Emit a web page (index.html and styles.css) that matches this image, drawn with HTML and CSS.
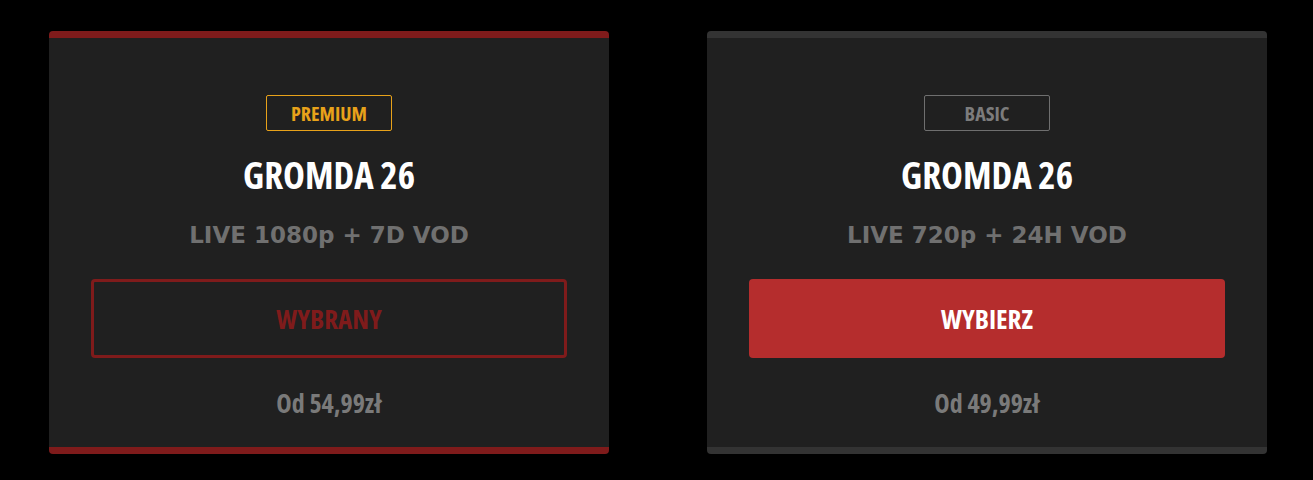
FILE: index.html
```html
<!DOCTYPE html>
<html lang="pl">
<head>
<meta charset="utf-8">
<title>Pakiety</title>
<link rel="stylesheet" href="styles.css">
</head>
<body>
<div class="plans">
  <div class="card card--premium">
    <div class="card__body">
      <span class="badge badge--premium">PREMIUM</span>
      <h2 class="card__title">GROMDA 26</h2>
      <p class="card__sub">LIVE 1080p + 7D VOD</p>
      <button class="btn btn--selected">WYBRANY</button>
      <p class="card__price">Od 54,99zł</p>
    </div>
  </div>
  <div class="card card--basic">
    <div class="card__body">
      <span class="badge badge--basic">BASIC</span>
      <h2 class="card__title">GROMDA 26</h2>
      <p class="card__sub">LIVE 720p + 24H VOD</p>
      <button class="btn btn--choose">WYBIERZ</button>
      <p class="card__price">Od 49,99zł</p>
    </div>
  </div>
</div>
</body>
</html>
```

FILE: styles.css
```css
html, body {
  margin: 0;
  padding: 0;
  background: #000;
}

.plans {
  display: flex;
  gap: 98px;
  padding: 31px 0 0 49px;
}

.card {
  box-sizing: border-box;
  width: 560px;
  height: 423px;
  background: #202020;
  border-radius: 4px;
  border-top: 7px solid;
  border-bottom: 7px solid;
}

.card--premium { border-color: #7f1b1b; }
.card--basic { border-color: #333333; }

.card__body {
  display: flex;
  flex-direction: column;
  align-items: center;
  padding: 57px 42px 0;
}

.badge {
  box-sizing: border-box;
  display: flex;
  align-items: center;
  justify-content: center;
  width: 126px;
  height: 36px;
  border: 1px solid;
  border-radius: 2px;
  font-family: "Open Sans", sans-serif;
  font-stretch: 75%;
  font-weight: 700;
  font-size: 20px;
}

.badge--premium { color: #e8a21a; border-color: #e8a21a; }
.badge--basic { color: #7c7c7c; border-color: #6f6f6f; }

.card__title {
  margin: 22px 0 0;
  height: 44px;
  line-height: 44px;
  font-family: "Open Sans", sans-serif;
  font-stretch: 75%;
  font-weight: 700;
  font-size: 37px;
  color: #ffffff;
}

.card__sub {
  margin: 23px 0 0;
  height: 30px;
  line-height: 30px;
  font-family: "DejaVu Sans", sans-serif;
  font-weight: 700;
  font-size: 23px;
  color: #707070;
}

.btn {
  box-sizing: border-box;
  width: 100%;
  height: 79px;
  margin-top: 29px;
  border-radius: 4px;
  font-family: "Open Sans", sans-serif;
  font-stretch: 75%;
  font-weight: 700;
  font-size: 27px;
  cursor: pointer;
}

.btn--selected {
  background: transparent;
  border: 3px solid #7f1b1b;
  color: #7f1b1b;
}

.btn--choose {
  background: #b52d2d;
  border: none;
  color: #ffffff;
}

.card__price {
  margin: 28px 0 0;
  height: 34px;
  line-height: 34px;
  font-family: "Open Sans", sans-serif;
  font-stretch: 75%;
  font-weight: 700;
  font-size: 26px;
  color: #7a7a7a;
}
```
